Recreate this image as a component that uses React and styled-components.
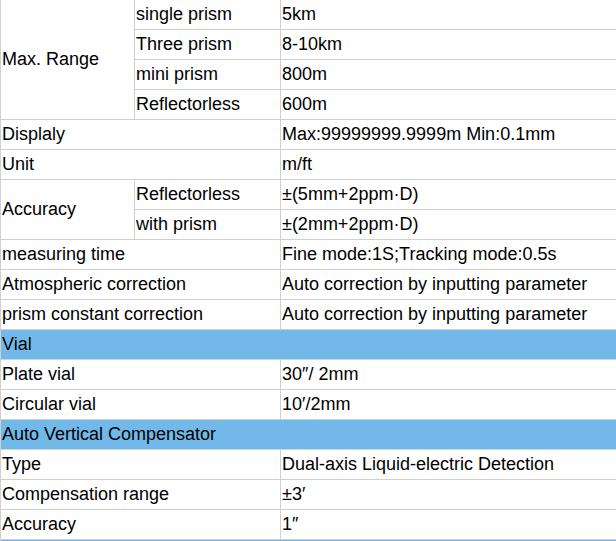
import React from 'react';
import styled, { createGlobalStyle } from 'styled-components';

const GlobalStyle = createGlobalStyle`
  html, body {
    margin: 0;
    padding: 0;
    background: #ffffff;
    overflow: hidden;
  }
`;

const Table = styled.table`
  border-collapse: separate;
  border-spacing: 0;
  border-left: 1px solid #d0d0d0;
  width: 660px;
  table-layout: fixed;
  font-family: 'Liberation Sans', Arial, sans-serif;
  font-size: 18px;
  color: #000000;
`;

const Col = styled.col`
  width: ${(props) => props.$width}px;
`;

const Cell = styled.td`
  height: 30px;
  padding: 0 0 2px 1px;
  box-sizing: border-box;
  border-right: 1px solid #d0d0d0;
  border-bottom: 1px solid #d0d0d0;
  vertical-align: middle;
  white-space: nowrap;
  line-height: 20px;
`;

const HeaderCell = styled(Cell)`
  background-color: #72b9e9;
  border-right: none;
  border-bottom: 1px solid #c4d8e6;
`;

const rows = [
  { cells: [{ text: 'Max. Range', rowSpan: 4 }, { text: 'single prism' }, { text: '5km' }] },
  { cells: [{ text: 'Three prism' }, { text: '8-10km' }] },
  { cells: [{ text: 'mini prism' }, { text: '800m' }] },
  { cells: [{ text: 'Reflectorless' }, { text: '600m' }] },
  { cells: [{ text: 'Displaly', colSpan: 2 }, { text: 'Max:99999999.9999m Min:0.1mm' }] },
  { cells: [{ text: 'Unit', colSpan: 2 }, { text: 'm/ft' }] },
  { cells: [{ text: 'Accuracy', rowSpan: 2 }, { text: 'Reflectorless' }, { text: '±(5mm+2ppm·D)' }] },
  { cells: [{ text: 'with prism' }, { text: '±(2mm+2ppm·D)' }] },
  { cells: [{ text: 'measuring time', colSpan: 2 }, { text: 'Fine mode:1S;Tracking mode:0.5s' }] },
  { cells: [{ text: 'Atmospheric correction', colSpan: 2 }, { text: 'Auto correction by inputting parameter' }] },
  { cells: [{ text: 'prism constant correction', colSpan: 2 }, { text: 'Auto correction by inputting parameter' }] },
  { header: 'Vial' },
  { cells: [{ text: 'Plate vial', colSpan: 2 }, { text: '30″/ 2mm' }] },
  { cells: [{ text: 'Circular vial', colSpan: 2 }, { text: '10′/2mm' }] },
  { header: 'Auto Vertical Compensator' },
  { cells: [{ text: 'Type', colSpan: 2 }, { text: 'Dual-axis Liquid-electric Detection' }] },
  { cells: [{ text: 'Compensation range', colSpan: 2 }, { text: '±3′' }] },
  { cells: [{ text: 'Accuracy', colSpan: 2 }, { text: '1″' }] },
  { header: '' },
];

const App = () => {
  return (
    <>
      <GlobalStyle />
      <Table>
        <colgroup>
          <Col $width={134} />
          <Col $width={146} />
          <Col $width={380} />
        </colgroup>
        <tbody>
          {rows.map((row, i) =>
            'header' in row ? (
              <tr key={i}>
                <HeaderCell colSpan={3}>{row.header}</HeaderCell>
              </tr>
            ) : (
              <tr key={i}>
                {row.cells.map((cell, j) => (
                  <Cell key={j} rowSpan={cell.rowSpan} colSpan={cell.colSpan}>
                    {cell.text}
                  </Cell>
                ))}
              </tr>
            )
          )}
        </tbody>
      </Table>
    </>
  );
};

export default App;
